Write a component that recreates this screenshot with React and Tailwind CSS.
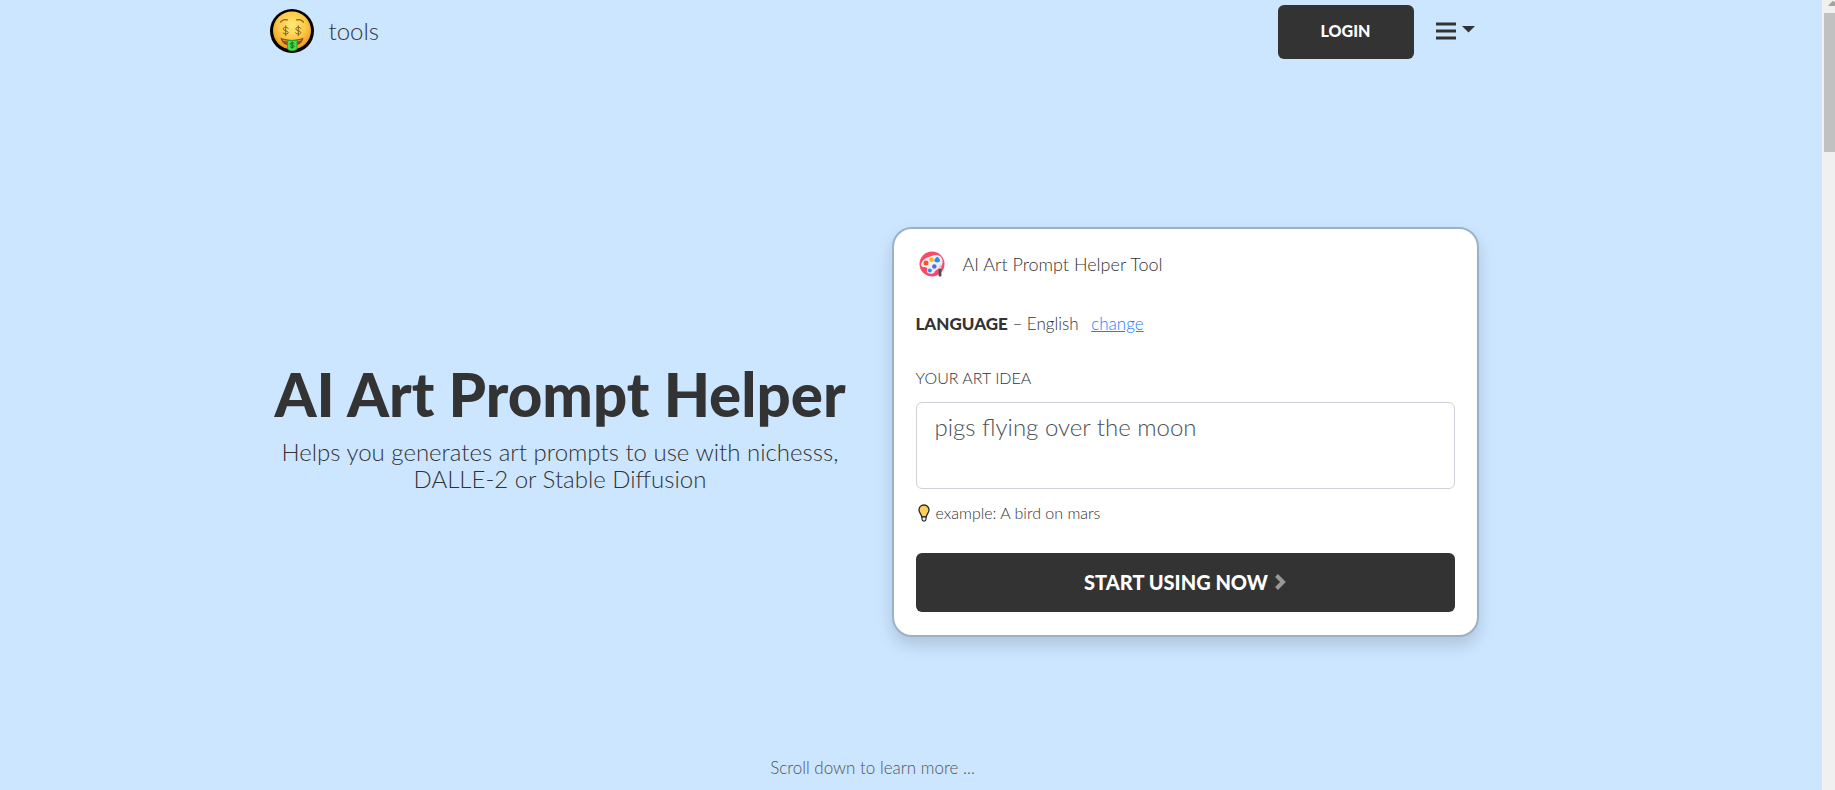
import { useState } from "react";

const MoneyFace = () => (
  <svg viewBox="0 0 44 44" className="size-11" aria-hidden="true">
    <defs>
      <radialGradient id="face" cx="50%" cy="36%" r="64%">
        <stop offset="0%" stopColor="#ffe979" />
        <stop offset="55%" stopColor="#fdca48" />
        <stop offset="100%" stopColor="#ee951c" />
      </radialGradient>
    </defs>
    <circle cx="22" cy="22" r="22" fill="#000" />
    <circle cx="22" cy="21.5" r="19" fill="url(#face)" />
    <path
      d="M10.500 13.200c1.200-2 4-3 7-2.400M26.500 10.800c3-.6 5.800.4 7 2.400"
      fill="none"
      stroke="#9a5a14"
      strokeWidth="1.200"
      strokeLinecap="round"
    />
    <g fill="none" stroke="#80601c" strokeWidth="1" strokeLinecap="round">
      <path d="M18.200 19.300c-.5-1.500-5-1.500-5 .6s5 1.600 5 3.700-4.600 1.900-5.200.2M15.700 16.800v9.800" />
      <path d="M30.800 19.300c-.5-1.500-5-1.500-5 .6s5 1.600 5 3.700-4.600 1.900-5.200.2M28.300 16.800v9.800" />
    </g>
    <path d="M10.500 28.800c7 2.800 16 2.800 23 0-1 5.500-5.500 8.200-11.500 8.200s-10.500-2.700-11.500-8.200z" fill="#8f4c12" />
    <path d="M12.500 30.500c5.500 1.700 13.500 1.700 19 0l-.6 1.300c-5 1.300-12.800 1.300-17.800 0z" fill="#d9953f" />
    <path d="M17.500 31.400h9.500v8.600c-1.500 2.400-8 2.400-9.500 0z" fill="#46e04a" stroke="#1fa02c" strokeWidth=".8" />
    <path
      d="M24.300 34.500c-.4-1.100-4-1.100-4 .4s4 1 4 2.500-3.600 1.400-4.200.3M22.200 32.800v6.600"
      fill="none"
      stroke="#12661c"
      strokeWidth=".9"
      strokeLinecap="round"
    />
  </svg>
);

const Palette = () => (
  <svg viewBox="0 0 26 26" className="size-[26px]" aria-hidden="true">
    <circle cx="13" cy="13" r="12.5" fill="#fb4a67" />
    <path
      d="M12 5.200C16 3 22 3.500 23.300 8.500c1 4-.8 8-4.300 9.500-2 1-3 2-3.500 3.200-1 2-6.500 2-7.500-.2-.6-1.500 1.200-3-.2-4.200-1.300-1-4.300.2-5.600-2C.8 11.500 6 6.500 12 5.200z"
      fill="#eef1f9"
    />
    <circle cx="7" cy="12" r="2.500" fill="#f4552c" />
    <circle cx="12.500" cy="8.800" r="2.300" fill="#fdb813" />
    <path d="M15.300 10.300c0-2 1.500-4 3-4.500 1.500.8 3 2.800 2.700 4.500-1 1.500-4.700 1.500-5.700 0z" fill="#2490f5" />
    <circle cx="15.300" cy="15.500" r="2.300" fill="#6a62dc" />
    <circle cx="10.800" cy="19.500" r="2" fill="#2490f5" />
    <path d="M19.600 17.500h2.800v8h-2.300l-.5-1z" fill="#4b4e57" />
    <path d="M20.200 13.500h1.700l.5 4h-2.800z" fill="#d5d8e0" />
  </svg>
);

const Bulb = () => (
  <svg viewBox="0 0 12 18" className="h-[18px] w-3" aria-hidden="true">
    <path
      d="M6 1C3 1 1 3.200 1 6c0 2.800 2.400 4.200 2.800 7h4.400C8.600 10.200 11 8.800 11 6c0-2.800-2-5-5-5z"
      fill="#fdd05a"
      stroke="#262626"
      strokeWidth="1.300"
    />
    <path d="M4 13h4v2.500c0 .9-.8 1.600-2 1.600s-2-.7-2-1.600z" fill="#e8edf2" stroke="#262626" strokeWidth="1.100" />
  </svg>
);

const Header = () => (
  <header className="flex items-start justify-between px-[22px] pt-[5px]">
    <a href="#" className="flex items-center gap-[15px] pt-1 text-2xl font-light">
      <MoneyFace />
      <span>tools</span>
    </a>
    <div className="flex items-center gap-[22px]">
      <button className="h-[54px] w-[136px] rounded-md bg-[#333] pb-0.5 text-base font-black text-white">
        LOGIN
      </button>
      <button aria-label="Menu" className="flex items-center gap-1.5 pr-px pb-0.5">
        <svg viewBox="0 0 20 18" className="h-[18px] w-5" aria-hidden="true">
          <path d="M0 2h20M0 9h20M0 16h20" stroke="#333" strokeWidth="3" />
        </svg>
        <svg viewBox="0 0 13 10" className="h-2.5 w-[13px]" aria-hidden="true">
          <path d="M0 0h13L6.500 6.500z" fill="#333" />
        </svg>
      </button>
    </div>
  </header>
);

const PromptCard = () => {
  const [idea, setIdea] = useState("pigs flying over the moon");

  return (
    <form
      className="rounded-[20px] border-2 border-[#9ab2c9] bg-white px-[22px] pt-[22px] pb-[23px] shadow-[0_8px_16px_rgba(0,0,0,0.15)]"
      onSubmit={(event) => event.preventDefault()}
    >
      <div className="flex items-center gap-[18px] pl-[3px]">
        <Palette />
        <h2 className="text-lg leading-[26px] font-light">AI Art Prompt Helper Tool</h2>
      </div>
      <p className="mt-[35px] text-[17px] leading-6 font-light">
        <strong className="font-black">LANGUAGE</strong> – English{" "}
        <a href="#" className="ml-2 text-[#1a7cff] underline">
          change
        </a>
      </p>
      <label htmlFor="idea" className="mt-[30px] block text-base leading-6 font-light">
        YOUR ART IDEA
      </label>
      <textarea
        id="idea"
        value={idea}
        onChange={(event) => setIdea(event.target.value)}
        className="mt-3 block h-[87px] w-full resize-none rounded-md border border-[#ced0da] px-[18px] py-2 text-2xl leading-8 font-light text-[#495057] outline-none"
      />
      <p className="mt-3 flex items-center gap-1.5 text-base leading-6 font-light">
        <span className="flex pl-0.5">
          <Bulb />
        </span>
        example: A bird on mars
      </p>
      <button className="mt-7 flex h-[59px] w-full items-center justify-center gap-1.5 rounded-md bg-[#333] text-xl font-black text-white">
        START USING NOW
        <svg viewBox="0 0 12 18" className="h-[18px] w-3" aria-hidden="true">
          <path d="M2.500 2.500L9 9l-6.500 6.500" fill="none" stroke="#999" strokeWidth="4" />
        </svg>
      </button>
    </form>
  );
};

const ScrollTrack = () => (
  <div className="w-[13px] shrink-0 bg-[#f0f0f0] pl-0.5" aria-hidden="true">
    <svg viewBox="0 0 11 13" className="h-[13px] w-[11px]">
      <path d="M4 6h7V2L8.500 1z" fill="#a3a39c" />
    </svg>
    <div className="h-[139px] bg-[#c1c1c1]" />
  </div>
);

const App = () => {
  return (
    <div className="flex min-h-screen bg-[#cce6ff] font-[Lato,sans-serif] text-[#333]">
      <div className="flex grow flex-col pr-[77px]">
        <div className="mx-auto flex w-full max-w-[1250px] grow flex-col">
          <Header />
          <main className="grid grow grid-cols-2 items-center pt-12">
            <section className="px-4 pb-2.5 text-center">
              <h1 className="text-[60px] leading-[64px] font-black">AI Art Prompt Helper</h1>
              <p className="mt-3 text-2xl leading-[27px] font-light">
                Helps you generates art prompts to use with nichesss,
                <br />
                DALLE-2 or Stable Diffusion
              </p>
            </section>
            <section className="px-[19px]">
              <PromptCard />
            </section>
          </main>
          <p className="pb-2.5 text-center text-[17px] leading-6 font-light text-[#555]">
            Scroll down to learn more ...
          </p>
        </div>
      </div>
      <ScrollTrack />
    </div>
  );
};

export default App;
